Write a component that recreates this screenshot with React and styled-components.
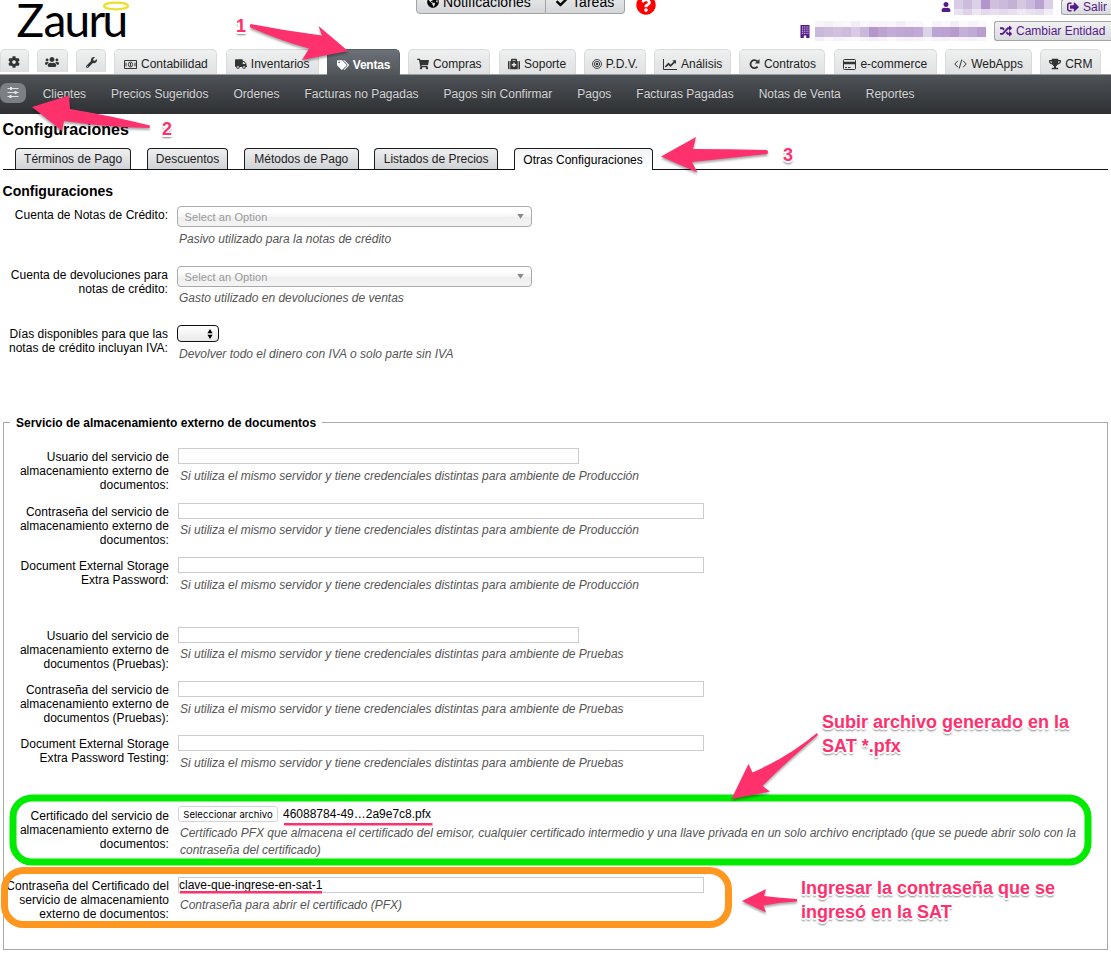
import React from "react";
import styled, { createGlobalStyle, css } from "styled-components";
import {
    FaCog, FaUsers, FaWrench, FaTruck, FaTags, FaShoppingCart, FaMedkit,
    FaTrophy, FaCheck, FaGlobeAmericas,
    FaSignOutAlt, FaRandom, FaUser, FaQuestionCircle,
} from "react-icons/fa";

const GlobalStyle = createGlobalStyle`
    *{
        box-sizing: border-box;
    }
    body{
        margin: 0;
        background: #fff;
        color: #000;
        font-family: "Liberation Sans", Arial, sans-serif;
        font-size: 12px;
        line-height: 14px;
    }
`;
const Page = styled.div`
    position: relative;
    width: 1111px;
    height: 953px;
    overflow: hidden;
`;

/* header */
const Header = styled.header`
    display: flex;
    justify-content: space-between;
    height: 49px;
`;
const Logo = styled.svg`
    flex: none;
    width: 130px;
    height: 49px;
`;
const Notices = styled.div`
    display: flex;
    align-items: flex-start;
    width: 241px;
    margin-left: 286px;
`;
const NoticeButton = styled.div`
    display: flex;
    align-items: center;
    gap: 4px;
    width: ${(props) => props.$width}px;
    height: 26px;
    margin-top: -12px;
    padding: 1px 0 0 10px;
    border: 1px solid #a3a3a3;
    border-left-width: ${(props) => (props.$last ? 0 : 1)}px;
    border-radius: ${(props) => (props.$last ? "0 4px 4px 0" : "4px 0 0 4px")};
    background: linear-gradient(#f1f1f2, #d3d5d8);
    font-size: 14px;
    letter-spacing: .05px;
    & svg{
        font-size: 12px;
    }
`;
const Help = styled(FaQuestionCircle)`
    margin: -5px 0 0 11px;
    color: #fe0000;
    font-size: 20px;
    flex: none;
`;
const Account = styled.div`
    display: flex;
    flex-direction: column;
    align-items: flex-end;
    width: 454px;
    color: #551a8b;
`;
const AccountRow = styled.div`
    display: flex;
    align-items: center;
    height: ${(props) => props.$height}px;
    margin-top: ${(props) => props.$top}px;
`;
const AccountButton = styled.div`
    display: flex;
    align-items: center;
    gap: 4px;
    align-self: stretch;
    width: ${(props) => props.$width}px;
    margin-left: 8px;
    padding-left: 5px;
    border: 1px solid #a3a3a3;
    border-right: 0;
    border-radius: 3px 0 0 3px;
    background: linear-gradient(#f1f1f2, #d8dadc);
`;
const Mask = styled.div`
    display: grid;
    grid-template-columns: repeat(${(props) => props.$columns}, 9px);
    grid-template-rows: ${(props) => props.$rows};
    margin-left: ${(props) => props.$left}px;
`;
const Cell = styled.i`
    background: ${(props) => props.$color};
`;

/* main navigation */
const Tabs = styled.nav`
    display: flex;
    align-items: flex-start;
    gap: 8.3px;
    height: 26px;
    border-bottom: 1px solid #9b9d9e;
`;
const Tab = styled.div`
    display: flex;
    flex: none;
    align-items: center;
    justify-content: center;
    gap: 4px;
    width: ${(props) => props.$width}px;
    height: ${(props) => (props.$small ? 23 : 25)}px;
    padding-top: ${(props) => (props.$small ? 2 : 4)}px;
    border: 1px solid #d9dadb;
    border-bottom: 0;
    border-radius: 5px 5px 0 0;
    background: linear-gradient(#eff0f0, #dfe1e2);
    color: #222;
    white-space: nowrap;
    & svg{
        flex: none;
        font-size: 12px;
        color: #333;
    }
    ${(props) => props.$active && css`
        height: 26px;
        border-color: #575c60;
        background: linear-gradient(#6b7177, #50555a);
        color: #fff;
        font-weight: 700;
        letter-spacing: -.2px;
        & svg{
            color: #fff;
        }
    `}
`;
const SubNav = styled.nav`
    display: flex;
    align-items: center;
    gap: 25px;
    height: 39px;
    padding-bottom: 2px;
    background: linear-gradient(#4e5357, #2e3033);
    color: #d6d6d6;
    white-space: nowrap;
    text-shadow: 0 -1px 0 rgba(0,0,0,0.3);
`;
const Settings = styled.div`
    display: flex;
    align-items: center;
    justify-content: center;
    width: 26px;
    height: 20px;
    margin: -2px -8.3px 0 0;
    border-radius: 7px;
    background: #7b8087;
`;

/* content */
const Title = styled.h1`
    height: 34px;
    margin: 0;
    padding: 7px 0 0 2.6px;
    font-size: 16px;
    line-height: 18px;
`;
const SubTabs = styled.div`
    display: flex;
    height: 22px;
    margin: 0 3px;
    padding-left: 12px;
    border-bottom: 1px solid #111;
`;
const SubTab = styled.div`
    width: ${(props) => props.$width}px;
    height: ${(props) => (props.$active ? 22 : 21)}px;
    margin-right: 15.4px;
    padding-top: ${(props) => (props.$active ? 4 : 3)}px;
    border: 1px solid #1c1f22;
    border-bottom: 0;
    border-radius: 4px 4px 0 0;
    background: ${(props) => (props.$active ? "linear-gradient(#f4f4f5, #fff)" : "linear-gradient(#efeff0, #d0d3d6)")};
    color: ${(props) => (props.$active ? "#000" : "#222")};
    text-align: center;
    white-space: nowrap;
`;
const SectionTitle = styled.h2`
    height: 36px;
    margin: 0;
    padding: 13px 0 0 2.6px;
    font-size: 14px;
    line-height: 16px;
`;
const Row = styled.div`
    display: grid;
    grid-template-columns: ${(props) => props.$label}px 1fr;
    column-gap: 9px;
    height: ${(props) => props.$height}px;
`;
const Label = styled.div`
    padding-top: ${(props) => props.$top || 2}px;
    letter-spacing: .04px;
    text-align: right;
    white-space: pre;
`;
const Hint = styled.div`
    margin-top: ${(props) => props.$top || 3}px;
    padding-left: 2px;
    color: #555;
    font-style: italic;
    line-height: 17px;
    white-space: pre-line;
`;
const Picker = styled.div`
    display: flex;
    align-items: center;
    justify-content: space-between;
    width: 355px;
    height: 21px;
    padding: 0 7px 0 6.5px;
    border: 1px solid #aaa;
    border-radius: 4px;
    background: linear-gradient(#fff 20%, #f6f6f6 50%, #eee 52%, #f4f4f4 100%);
    color: #999;
    font-size: 11px;
    letter-spacing: .1px;
    line-height: 16px;
`;
const DaysPicker = styled.div`
    display: flex;
    align-items: center;
    justify-content: flex-end;
    width: 42px;
    height: 17px;
    padding-right: 5px;
    border: 1px solid #111;
    border-radius: 4px;
    background: linear-gradient(#fff, #e9e9e9);
`;
const Fieldset = styled.fieldset`
    height: 535px;
    margin: 60px 3px 0;
    padding: 18px 0 0;
    border: 1px solid #a9a9a9;
`;
const Legend = styled.legend`
    margin-left: 6px;
    padding: 1px 6px 0;
    font-weight: 700;
`;
const Input = styled.div`
    width: ${(props) => (props.$short ? 401 : 526)}px;
    height: 16px;
    border: 1px solid #ccc;
    line-height: 14px;
    white-space: nowrap;
`;
const FileField = styled.div`
    display: flex;
    align-items: center;
    gap: 5px;
    height: 16px;
`;
const FileButton = styled.span`
    width: 100px;
    height: 16px;
    border: 1px solid #d4d4d4;
    border-radius: 3px;
    background: #fff;
    font: 9.5px/15px Inter, sans-serif;
    letter-spacing: .05px;
    text-align: center;
    white-space: nowrap;
`;

/* annotations laid over the page */
const Marks = styled.svg`
    position: absolute;
    top: 0;
    left: 0;
    width: 1111px;
    height: 953px;
    & .arrows{
        fill: #fe316d;
        filter: drop-shadow(0 2px 1px rgba(0,0,0,0.35));
    }
    & .underlines{
        fill: #fe316d;
    }
`;
const Note = styled.div`
    position: absolute;
    left: ${(props) => props.$x}px;
    top: ${(props) => props.$y}px;
    color: #fe316d;
    font-size: 18px;
    font-weight: 700;
    line-height: 24px;
    white-space: pre;
    text-shadow: -1px -1px 0 #fff, 1px -1px 0 #fff, -1px 1px 0 #fff, 1px 1px 0 #fff,
        2px 0 0 #fff, -2px 0 0 #fff, 0 2px 0 #fff, 0 3px 2px rgba(0,0,0,0.5);
`;

const MoneyIcon = () => (
    <svg width="13" height="9" viewBox="0 0 13 9" fill="none" stroke="#333">
        <path d="M.5.5h12v8H.5z" />
        <ellipse cx="6.5" cy="4.5" rx="2.1" ry="2.5" />
        <path d="M6.5 3v3M2 2.6v3.8M11 2.6v3.8" />
    </svg>
);
const TargetIcon = () => (
    <svg width="10" height="10" viewBox="0 0 10 10" fill="none" stroke="#333" strokeWidth=".9">
        <circle cx="5" cy="5" r="4.5" />
        <circle cx="5" cy="5" r="2.7" />
        <circle cx="5" cy="5" r="1.3" fill="#333" stroke="none" />
    </svg>
);
const ChartIcon = () => (
    <svg width="14" height="11" viewBox="0 0 14 11" fill="none" stroke="#333">
        <path d="M.5 0v10.500H14" />
        <path d="M2.300 8L5.500 4.800 7.500 6.800 11.500 2.800" strokeWidth="1.700" />
        <path d="M9.300 1.300h3.700V5z" fill="#333" stroke="none" />
    </svg>
);
const RepeatIcon = () => (
    <svg width="11" height="12" viewBox="0 0 11 12">
        <path d="M8.6 8.6A4 4 0 1 1 8.4 3.3" fill="none" stroke="#333" strokeWidth="1.8" />
        <path d="M10.5 1v4.6H5.9z" fill="#333" />
    </svg>
);
const CardIcon = () => (
    <svg width="13" height="11" viewBox="0 0 13 11">
        <rect x=".5" y=".5" width="12" height="10" rx="1" fill="none" stroke="#333" />
        <path d="M0 2.800h13v2.500H0zM2 8h2v1H2zM5 8h2.500v1H5z" fill="#333" />
    </svg>
);
const CodeIcon = () => (
    <svg width="13" height="10" viewBox="0 0 13 10" fill="none" stroke="#333">
        <path d="M3.800 1.800L.8 5l3 3.200M9.200 1.800l3 3.200-3 3.200M7.800.5l-2.600 9" />
    </svg>
);
const BuildingIcon = () => (
    <svg width="10" height="13" viewBox="0 0 10 13">
        <path d="M.5 0h9v13H6.2v-2.4H3.8V13H.5z" fill="#551a8b" />
        <path d="M2 2h6.500M2 4.100h6.500M2 6.200h6.500M2 8.300h6.500" stroke="#fff" strokeWidth=".9" strokeDasharray="1 .8" />
    </svg>
);
const SlidersIcon = () => (
    <svg width="12" height="11" viewBox="0 0 12 11" stroke="#e4e4e4">
        <path d="M.5 1.500h11M.5 5.500h11M.5 9.500h11" />
        <path d="M4 0v3M8.500 4v3M3.500 8v3" strokeWidth="2" />
    </svg>
);

const tabs = [
    { width: 28.5, icon: <FaCog />, small: true },
    { width: 31, icon: <FaUsers size={14} />, small: true },
    { width: 30, icon: <FaWrench size={11} />, small: true },
    { width: 103, icon: <MoneyIcon />, name: "Contabilidad" },
    { width: 93, icon: <FaTruck />, name: "Inventarios" },
    { width: 73, icon: <FaTags />, name: "Ventas", active: true },
    { width: 82, icon: <FaShoppingCart />, name: "Compras" },
    { width: 77, icon: <FaMedkit />, name: "Soporte" },
    { width: 62, icon: <TargetIcon />, name: "P.D.V." },
    { width: 77, icon: <ChartIcon />, name: "Análisis" },
    { width: 86, icon: <RepeatIcon />, name: "Contratos" },
    { width: 103, icon: <CardIcon />, name: "e-commerce" },
    { width: 87, icon: <CodeIcon />, name: "WebApps" },
    { width: 61, icon: <FaTrophy />, name: "CRM" },
];
const sections = [
    "Clientes", "Precios Sugeridos", "Ordenes", "Facturas no Pagadas", "Pagos sin Confirmar",
    "Pagos", "Facturas Pagadas", "Notas de Venta", "Reportes",
];
const subTabs = [
    { name: "Términos de Pago", width: 116.3 },
    { name: "Descuentos", width: 81.7 },
    { name: "Métodos de Pago", width: 115 },
    { name: "Listados de Precios", width: 124 },
    { name: "Otras Configuraciones", width: 139, active: true },
];
const production = "Si utiliza el mismo servidor y tiene credenciales distintas para ambiente de Producción";
const testing = "Si utiliza el mismo servidor y tiene credenciales distintas para ambiente de Pruebas";
const credentials = [
    { label: "Usuario del servicio de\nalmacenamiento externo de\ndocumentos:", hint: production, height: 55, top: 4, short: true },
    { label: "Contraseña del servicio de\nalmacenamiento externo de\ndocumentos:", hint: production, height: 54 },
    { label: "Document External Storage\nExtra Password:", hint: production, height: 70, top: 4 },
    { label: "Usuario del servicio de\nalmacenamiento externo de\ndocumentos (Pruebas):", hint: testing, height: 54, short: true },
    { label: "Contraseña del servicio de\nalmacenamiento externo de\ndocumentos (Pruebas):", hint: testing, height: 54, top: 4 },
    { label: "Document External Storage\nExtra Password Testing:", hint: testing, height: 71, top: 4 },
];
const userMask = [
    "#d9cce6", "#cbbddb", "#dccfe8", "#b096cb", "#d0c0de", "#cbbadb", "#c4b2d6", "#d4c8e1", "#cbbadb", "#b9a2cf", "#dacfe7",
    "#e9e1f1", "#ded2e9", "#ece5f3", "#e3d9ec", "#e8dff0", "#e3d9ec", "#e9e1f1", "#efe8f5", "#e9e1f1", "#e5dcef", "#f2edf7",
];
const entityMask = [
    "#f8f5fa", "#f4f0f8", "#f8f6fa", "#faf8fc", "#f2eef6", "#faf8fc", "#f6f3fa", "#f6f3fa", "#f8f6fa", "#f2eef6", "#f8f6fa", "#faf8fc", "#fff", "#f6f3fa", "#faf8fc", "#f2eef6", "#faf8fc", "#f6f3fa", "#faf8fc",
    "#c9b8da", "#cdbedd", "#d0c1df", "#cdbddd", "#d8cae5", "#cbb9dc", "#b397cd", "#bba4d1", "#c2acd7", "#bfa9d4", "#bda6d3", "#c0abd6", "#ded2e9", "#bba4d3", "#bba2d2", "#b69bce", "#c4afd8", "#c0abd6", "#b79ed0",
    "#f3eef7", "#faf8fc", "#f6f2f9", "#f8f6fa", "#faf8fc", "#f6f2f9", "#f2eef6", "#f6f2f9", "#faf8fc", "#f6f2f9", "#f4f0f8", "#f6f2f9", "#faf8fc", "#f6f2f9", "#f4f0f8", "#f8f6fa", "#f6f2f9", "#f4f0f8", "#f8f6fa",
];

const ConfigPicker = () => (
    <Picker>
        Select an Option
        <svg width="7" height="5" viewBox="0 0 7 5"><path d="M.3 0h6.400L3.500 4.800z" fill="#888" /></svg>
    </Picker>
);

const App = () => {
    return (
        <Page>
            <GlobalStyle />
            <Header>
                <Logo viewBox="0 0 130 49">
                    <text x="16.5 43.500 64.500 88.500 102.500" y="36.500" fontFamily="Lato, sans-serif" fontSize="46">Zauru</text>
                    <ellipse cx="116" cy="6" rx="12" ry="3.300" fill="none" stroke="#ecdf2f" strokeWidth="2.200" />
                </Logo>
                <Notices>
                    <NoticeButton $width={130}><FaGlobeAmericas />Notificaciones</NoticeButton>
                    <NoticeButton $width={79} $last><FaCheck />Tareas</NoticeButton>
                    <Help />
                </Notices>
                <Account>
                    <AccountRow $height={16} $top={-1}>
                        <FaUser size={10} />
                        <Mask $columns={11} $rows="10px 6px" $left={3}>
                            {userMask.map((color, i) => <Cell key={i} $color={color} />)}
                        </Mask>
                        <AccountButton $width={50}><FaSignOutAlt />Salir</AccountButton>
                    </AccountRow>
                    <AccountRow $height={20} $top={6}>
                        <BuildingIcon />
                        <Mask $columns={19} $rows="6px 10px 4px" $left={5}>
                            {entityMask.map((color, i) => <Cell key={i} $color={color} />)}
                        </Mask>
                        <AccountButton $width={117}><FaRandom />Cambiar Entidad</AccountButton>
                    </AccountRow>
                </Account>
            </Header>
            <Tabs>
                {tabs.map((tab, i) => (
                    <Tab key={i} $width={tab.width} $small={tab.small} $active={tab.active}>
                        {tab.icon}{tab.name}
                    </Tab>
                ))}
            </Tabs>
            <SubNav>
                <Settings><SlidersIcon /></Settings>
                {sections.map((name) => <span key={name}>{name}</span>)}
            </SubNav>

            <Title>Configuraciones</Title>
            <SubTabs>
                {subTabs.map((tab) => (
                    <SubTab key={tab.name} $width={tab.width} $active={tab.active}>{tab.name}</SubTab>
                ))}
            </SubTabs>
            <SectionTitle>Configuraciones</SectionTitle>
            <Row $label={168} $height={60}>
                <Label>Cuenta de Notas de Crédito:</Label>
                <div>
                    <ConfigPicker />
                    <Hint $top={4}>Pasivo utilizado para la notas de crédito</Hint>
                </div>
            </Row>
            <Row $label={168} $height={59}>
                <Label>{"Cuenta de devoluciones para\nnotas de crédito:"}</Label>
                <div>
                    <ConfigPicker />
                    <Hint>Gasto utilizado en devoluciones de ventas</Hint>
                </div>
            </Row>
            <Row $label={168} $height={30}>
                <Label>{"Días disponibles para que las\nnotas de crédito incluyan IVA:"}</Label>
                <div>
                    <DaysPicker>
                        <svg width="6" height="10" viewBox="0 0 6 10"><path d="M3 0l2.600 4.300H.4zM3 10L.4 5.700h5.200z" /></svg>
                    </DaysPicker>
                    <Hint $top={4}>Devolver todo el dinero con IVA o solo parte sin IVA</Hint>
                </div>
            </Row>

            <Fieldset>
                <Legend>Servicio de almacenamiento externo de documentos</Legend>
                {credentials.map((item) => (
                    <Row key={item.label} $label={165} $height={item.height}>
                        <Label>{item.label}</Label>
                        <div>
                            <Input $short={item.short} />
                            <Hint $top={item.top}>{item.hint}</Hint>
                        </div>
                    </Row>
                ))}
                <Row $label={165} $height={71}>
                    <Label $top={3}>{"Certificado del servicio de\nalmacenamiento externo de\ndocumentos:"}</Label>
                    <div>
                        <FileField>
                            <FileButton>Seleccionar archivo</FileButton>
                            46088784-49…2a9e7c8.pfx
                        </FileField>
                        <Hint>{"Certificado PFX que almacena el certificado del emisor, cualquier certificado intermedio y una llave privada en un solo archivo encriptado (que se puede abrir solo con la\ncontraseña del certificado)"}</Hint>
                    </div>
                </Row>
                <Row $label={165} $height={60}>
                    <Label>{"Contraseña del Certificado del\nservicio de almacenamiento\nexterno de documentos:"}</Label>
                    <div>
                        <Input>clave-que-ingrese-en-sat-1</Input>
                        <Hint $top={4}>Contraseña para abrir el certificado (PFX)</Hint>
                    </div>
                </Row>
            </Fieldset>

            <Marks viewBox="0 0 1111 953">
                <rect x="13" y="798" width="1075" height="64" rx="19" fill="none" stroke="#00eb00" strokeWidth="7" />
                <rect x="4.500" y="870.5" width="724" height="54" rx="19" fill="none" stroke="#ff961e" strokeWidth="7" />
                <path className="underlines" d="M284 823h148.500v2.600H284zM180 891h142v2.600H180z" />
                <g className="arrows">
                    <path d="M251 24Q286 31 322 35.500L318.500 26 348 51 302 60 309 48.500Q281 41 250.500 27.500Q249 25 251 24Z" />
                    <path d="M150 125.500Q112 116 70 109L69 95.500 32 107 62 131 64 121Q105 127 149.500 128Z" />
                    <path d="M767 150Q730 149 693 149L696 137 661 156.500 697.500 172.500 692 162Q730 158 767 154Q769 152 767 150Z" />
                    <path d="M817 733Q788 757 752.500 772.500L748.500 764 731.500 799 770 791.500 762.500 786Q785 763 818 735Z" />
                    <path d="M797 899Q780 898 764 896L766 889 742 901 766 912.500 763.500 905.500Q780 902 797 901.500Z" />
                </g>
            </Marks>
            <Note $x={236} $y={14}>1</Note>
            <Note $x={162} $y={117}>2</Note>
            <Note $x={783} $y={143}>3</Note>
            <Note $x={822} $y={710}>{"Subir archivo generado en la\nSAT *.pfx"}</Note>
            <Note $x={801} $y={876}>{"Ingresar la contraseña que se\ningresó en la SAT"}</Note>
        </Page>
    )
}
export default App;
